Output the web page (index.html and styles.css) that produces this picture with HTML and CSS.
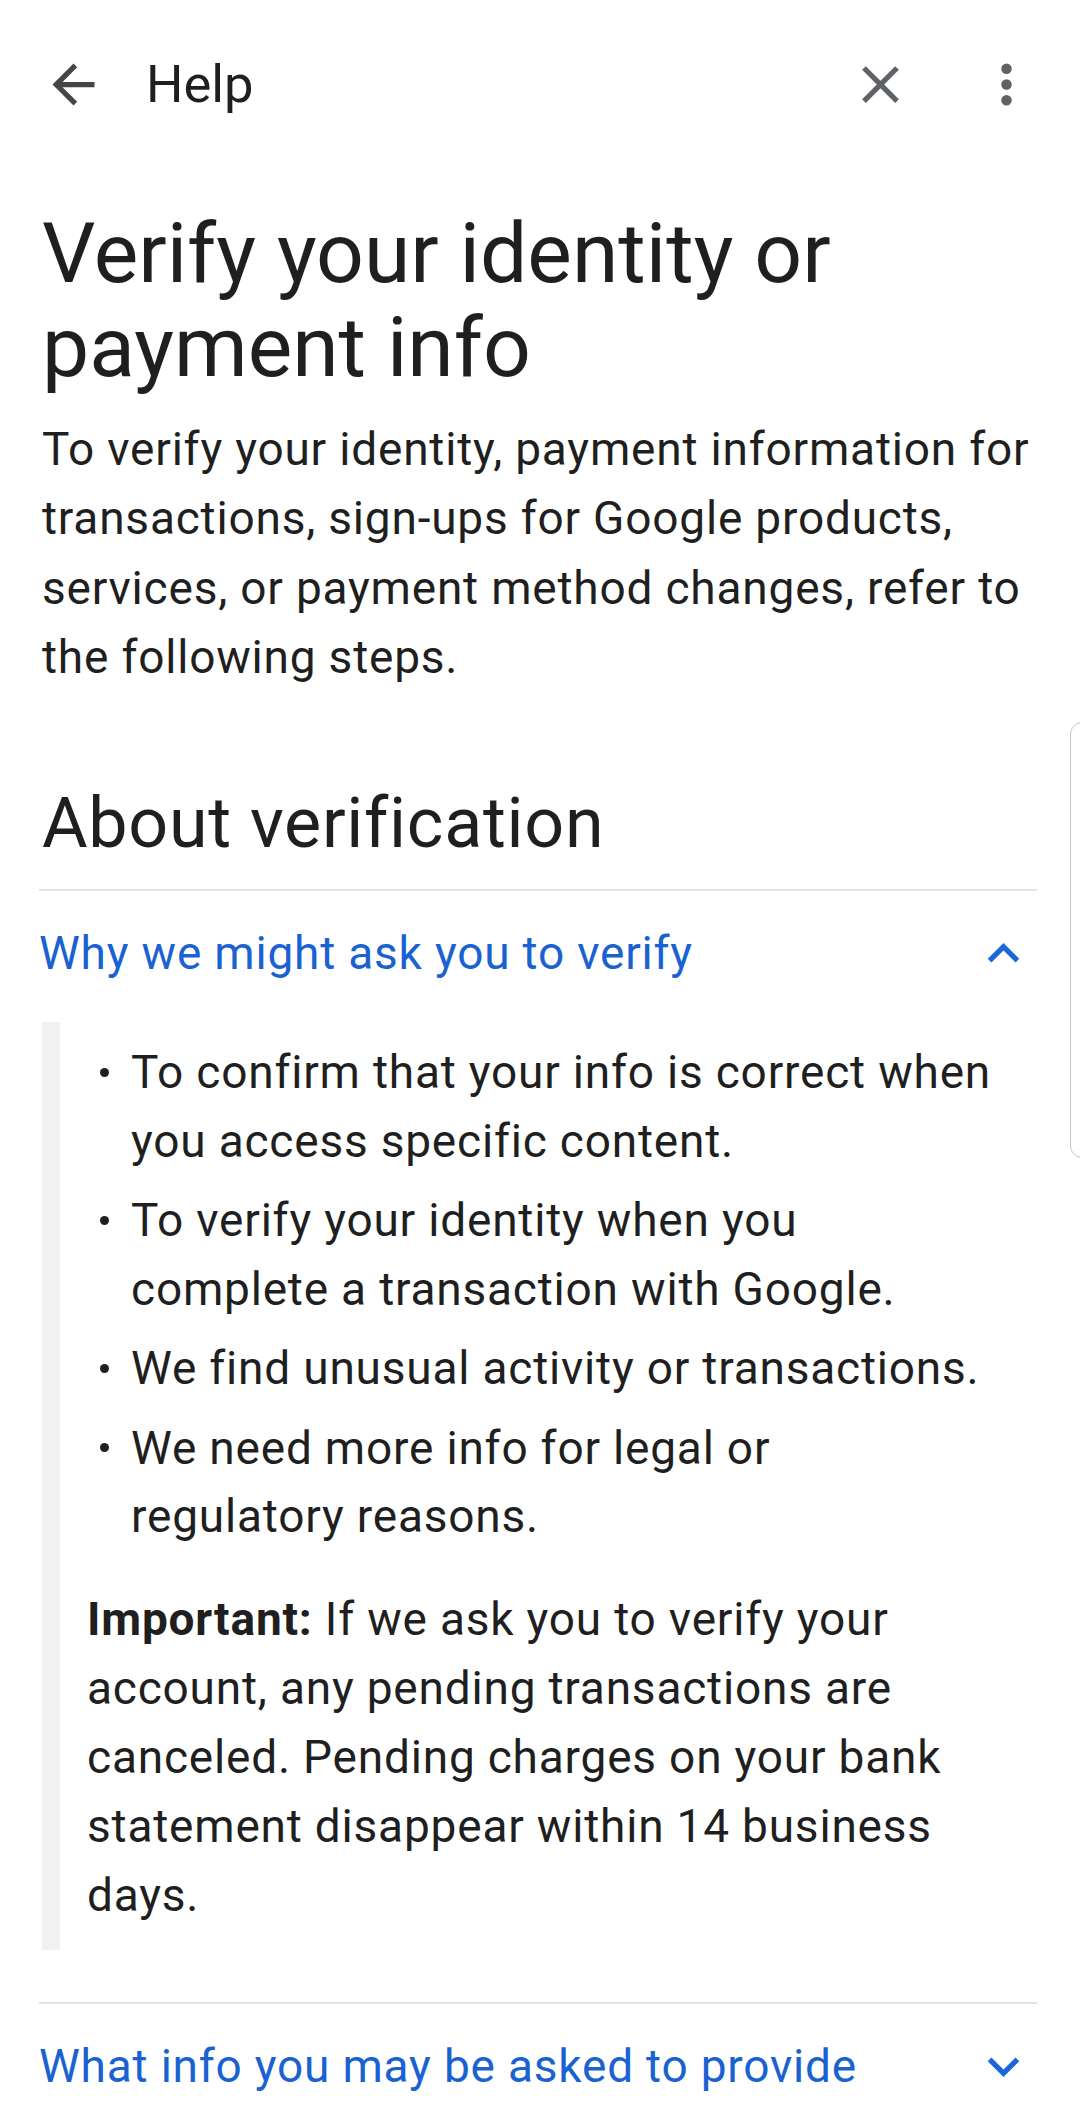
FILE: index.html
```html
<!DOCTYPE html>
<html lang="en">
<head>
  <meta charset="UTF-8" />
  <meta name="viewport" content="width=device-width, initial-scale=1.0"/>
  <title>Help - Verify your identity or payment info</title>
  <link rel="stylesheet" href="styles.css">
</head>
<body>
  <header class="topbar">
    <button class="icon-btn back-btn" aria-label="Back">
      <svg viewBox="0 0 24 24"><path d="M20 11H7.83l5.59-5.59L12 4l-8 8 8 8 1.41-1.41L7.83 13H20v-2z"/></svg>
    </button>
    <h1 class="topbar-title">Help</h1>
    <div class="topbar-actions">
      <button class="icon-btn" aria-label="Close">
        <svg viewBox="0 0 24 24"><path d="M19 6.41L17.59 5 12 10.59 6.41 5 5 6.41 10.59 12 5 17.59 6.41 19 12 13.41 17.59 19 19 17.59 13.41 12z"/></svg>
      </button>
      <button class="icon-btn" aria-label="More options">
        <svg viewBox="0 0 24 24"><circle cx="12" cy="6" r="2"/><circle cx="12" cy="12" r="2"/><circle cx="12" cy="18" r="2"/></svg>
      </button>
    </div>
  </header>

  <main class="article">
    <h1 class="article-title">Verify your identity or payment info</h1>
    <p class="intro">To verify your identity, payment information for transactions, sign-ups for Google products, services, or payment method changes, refer to the following steps.</p>

    <h2 class="section-title">About verification</h2>

    <div class="accordion">
      <section class="zippy open">
        <div class="zippy-head">
          <span>Why we might ask you to verify</span>
          <svg viewBox="0 0 24 24"><path d="M12 8l-6 6 1.41 1.41L12 10.83l4.59 4.58L18 14z"/></svg>
        </div>
        <div class="zippy-body">
          <ul>
            <li>To confirm that your info is correct when you access specific content.</li>
            <li>To verify your identity when you complete a transaction with Google.</li>
            <li>We find unusual activity or transactions.</li>
            <li>We need more info for legal or regulatory reasons.</li>
          </ul>
          <p><strong>Important:</strong> If we ask you to verify your account, any pending transactions are canceled. Pending charges on your bank statement disappear within 14 business days.</p>
        </div>
      </section>
      <section class="zippy">
        <div class="zippy-head">
          <span>What info you may be asked to provide</span>
          <svg viewBox="0 0 24 24"><path d="M16.59 8.59L12 13.17 7.41 8.59 6 10l6 6 6-6z"/></svg>
        </div>
      </section>
    </div>
  </main>

  <div class="scroll-thumb"></div>
</body>
</html>
```

FILE: styles.css
```css
body {
  margin: 0;
  font-family: Roboto, "Noto Sans", sans-serif;
  color: #1f1f1f;
  background: #ffffff;
  overflow: hidden;
}

.topbar {
  display: flex;
  align-items: center;
  height: 168px;
  padding: 0 42px;
}

.icon-btn {
  flex: none;
  width: 63px;
  height: 63px;
  padding: 0;
  border: none;
  background: none;
  display: flex;
  align-items: center;
  justify-content: center;
  fill: #5f6368;
}

.icon-btn svg {
  width: 63px;
  height: 63px;
}

.back-btn {
  fill: #444746;
}

.topbar-title {
  flex: 1;
  margin: 0 0 0 41px;
  font-size: 52.5px;
  font-weight: 400;
  color: #1f1f1f;
}

.topbar-actions {
  display: flex;
  gap: 63px;
}

.article {
  padding: 0 43px 0 42px;
}

.article-title {
  margin: 39px 0 0;
  font-size: 84px;
  line-height: 94px;
  font-weight: 400;
}

.intro {
  margin: 19.5px -20px 0 0;
  font-size: 46px;
  line-height: 69.5px;
  letter-spacing: 0.8px;
}

.section-title {
  margin: 90.5px 0 0;
  font-size: 70px;
  line-height: 80px;
  font-weight: 400;
  letter-spacing: 0.7px;
}

.accordion {
  margin: 26px 0 0 -3px;
}

.zippy {
  border-top: 2px solid #e3e3e3;
}

.zippy-head {
  display: flex;
  align-items: center;
  justify-content: space-between;
  height: 124px;
  font-size: 46px;
  letter-spacing: 0.8px;
  color: #1a62d1;
}

.zippy-head svg {
  flex: none;
  width: 63px;
  height: 63px;
  margin-right: 2px;
  fill: #1a68d8;
}

.zippy-body {
  margin: 7px 0 52px 3px;
  padding: 16px 44.5px 20px 27px;
  border-left: 18px solid #f1f1f1;
  font-size: 46px;
  line-height: 68.5px;
  letter-spacing: 0.8px;
}

.zippy-body ul {
  margin: 0;
  padding: 0;
  list-style: none;
  display: flex;
  flex-direction: column;
  gap: 11px;
}

.zippy-body li {
  display: flex;
}

.zippy-body li::before {
  content: "";
  flex: none;
  width: 9px;
  height: 9px;
  margin: 29.5px 22.5px 0 12.5px;
  border-radius: 50%;
  background: #1f1f1f;
}

.zippy-body p {
  margin: 34.5px 0 0;
  line-height: 69px;
}

.zippy-body strong {
  font-weight: 700;
}

.scroll-thumb {
  position: fixed;
  left: 1070px;
  top: 722px;
  width: 30px;
  height: 434px;
  border: 1.5px solid #c4c4c4;
  border-radius: 12px;
  background: #ffffff;
}
```
